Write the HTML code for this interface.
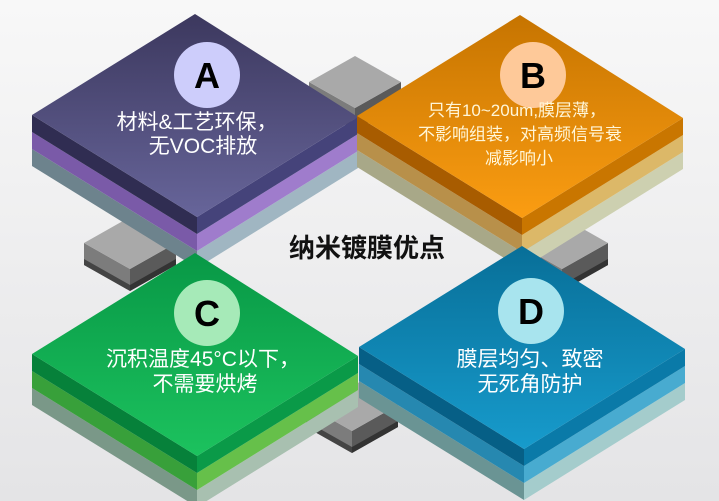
<!DOCTYPE html>
<html><head><meta charset="utf-8"><style>
html,body{margin:0;padding:0;width:719px;height:501px;overflow:hidden;background:#f2f2f2}
svg{display:block}
text{font-family:"Liberation Sans","Noto Sans CJK SC",sans-serif}
</style></head><body>
<svg id="s" width="719" height="501" viewBox="0 0 719 501" xmlns="http://www.w3.org/2000/svg">
<defs>
<linearGradient id="bg" x1="0" y1="0" x2="0" y2="1"><stop offset="0" stop-color="#f8f8f8"/><stop offset="1" stop-color="#e4e4e6"/></linearGradient>
<linearGradient id="gA" x1="0" y1="0" x2="0" y2="1"><stop offset="0" stop-color="#3c385e"/><stop offset="1" stop-color="#67659a"/></linearGradient>
<linearGradient id="gB" x1="0" y1="0" x2="0" y2="1"><stop offset="0" stop-color="#c67400"/><stop offset="1" stop-color="#fb9d12"/></linearGradient>
<linearGradient id="gC" x1="0" y1="0" x2="0" y2="1"><stop offset="0" stop-color="#089846"/><stop offset="1" stop-color="#1cc25e"/></linearGradient>
<linearGradient id="gD" x1="0" y1="0" x2="0" y2="1"><stop offset="0" stop-color="#086f98"/><stop offset="1" stop-color="#179bcc"/></linearGradient>
</defs>
<rect width="719" height="501" fill="url(#bg)"/>
<g id="blocks"></g>
<g id="tiles"></g>
<g font-size="21" fill="#fff" text-anchor="middle">
<circle cx="207" cy="75" r="33" fill="#cdcdfb"/>
<text x="207" y="88" font-size="36" font-weight="bold" fill="#000">A</text>
<text x="197" y="129">材料&amp;工艺环保，</text>
<text x="203" y="153">无VOC排放</text>
<circle cx="533" cy="75" r="33" fill="#fec999"/>
<text x="533" y="88" font-size="36" font-weight="bold" fill="#000">B</text>
<g font-size="17" fill="#fff6d8">
<text x="517" y="116">只有10~20um,膜层薄，</text>
<text x="520" y="140">不影响组装，对高频信号衰</text>
<text x="519" y="164">减影响小</text>
</g>
<circle cx="207" cy="313" r="33" fill="#a6eab8"/>
<text x="207" y="326" font-size="36" font-weight="bold" fill="#000">C</text>
<text x="203" y="366">沉积温度45°C以下，</text>
<text x="205" y="391">不需要烘烤</text>
<circle cx="531" cy="311" r="33" fill="#a8e4ee"/>
<text x="531" y="324" font-size="36" font-weight="bold" fill="#000">D</text>
<text x="530" y="366">膜层均匀、致密</text>
<text x="530" y="391">无死角防护</text>
<text x="367" y="257" font-size="26" font-weight="bold" fill="#111">纳米镀膜优点</text>
</g>
</svg>
<script>
var NS="http://www.w3.org/2000/svg";
function poly(g,pts,fill){var p=document.createElementNS(NS,"polygon");p.setAttribute("points",pts.map(function(a){return a.join(",")}).join(" "));p.setAttribute("fill",fill);g.appendChild(p);}
var bl=document.getElementById("blocks"),tl=document.getElementById("tiles");
function box(g,T,L,R,B,h,top,ls,rs){
 poly(g,[L,B,[B[0],B[1]+h],[L[0],L[1]+h]],ls);
 poly(g,[B,R,[R[0],R[1]+h],[B[0],B[1]+h]],rs);
 poly(g,[T,L,B,R],top);
}
function blk(cx,cy){box(bl,[cx,cy-26],[cx-46,cy],[cx+46,cy],[cx,cy+26],22,"#a9a9a9","#7c7c7c","#5a5a5a");
 poly(bl,[[cx-46,cy+16],[cx,cy+42],[cx,cy+48],[cx-46,cy+22]],"#444");poly(bl,[[cx,cy+42],[cx+46,cy+16],[cx+46,cy+22],[cx,cy+48]],"#333");}
blk(355,82);blk(130,243);blk(562,243);blk(352,405);
function tile(cx,ty,cols,grad){
 var T=[cx,ty],L=[cx-163,ty+101],R=[cx+163,ty+103],B=[cx+2,ty+203],h=17;
 for(var i=2;i>=0;i--){var o=i*h;
  box(tl,[T[0],T[1]+o],[L[0],L[1]+o],[R[0],R[1]+o],[B[0],B[1]+o],h,"none",cols[i][0],cols[i][1]);}
 poly(tl,[T,L,B,R],"url(#"+grad+")");
}
tile(195,14,[["#302d52","#45437a"],["#7a5aa8","#9f7ccc"],["#6d838d","#a0b6c2"]],"gA");
tile(520,15,[["#a85c00","#c97600"],["#b8904a","#dcb868"],["#a8a888","#cdd0b0"]],"gB");
tile(195,253,[["#06813a","#0a9a48"],["#38a03a","#66c04a"],["#7a9888","#a8c0b0"]],"gC");
tile(522,246,[["#065f86","#0a7aa8"],["#2688b0","#48abd0"],["#6a9494","#a4cccc"]],"gD");
</script>
</body></html>
